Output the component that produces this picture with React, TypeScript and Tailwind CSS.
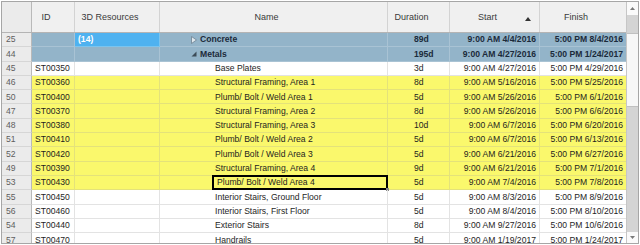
import React from "react";

type Row = {
  n: string;
  id: string;
  res?: string;
  name: string;
  level: 1 | 2;
  dur: string;
  start: string;
  finish: string;
  kind: "sum" | "yellow" | "white";
  expanded?: boolean;
  editor?: boolean;
};

const rows: Row[] = [
  { n: "25", id: "", res: "(14)", name: "Concrete", level: 1, dur: "89d", start: "9:00 AM 4/4/2016", finish: "5:00 PM 8/4/2016", kind: "sum", expanded: false },
  { n: "44", id: "", name: "Metals", level: 1, dur: "195d", start: "9:00 AM 4/27/2016", finish: "5:00 PM 1/24/2017", kind: "sum", expanded: true },
  { n: "45", id: "ST00350", name: "Base Plates", level: 2, dur: "3d", start: "9:00 AM 4/27/2016", finish: "5:00 PM 4/29/2016", kind: "white" },
  { n: "46", id: "ST00360", name: "Structural Framing, Area 1", level: 2, dur: "8d", start: "9:00 AM 5/16/2016", finish: "5:00 PM 5/25/2016", kind: "yellow" },
  { n: "50", id: "ST00400", name: "Plumb/ Bolt / Weld Area 1", level: 2, dur: "5d", start: "9:00 AM 5/26/2016", finish: "5:00 PM 6/1/2016", kind: "yellow" },
  { n: "47", id: "ST00370", name: "Structural Framing, Area 2", level: 2, dur: "8d", start: "9:00 AM 5/26/2016", finish: "5:00 PM 6/6/2016", kind: "yellow" },
  { n: "48", id: "ST00380", name: "Structural Framing, Area 3", level: 2, dur: "10d", start: "9:00 AM 6/7/2016", finish: "5:00 PM 6/20/2016", kind: "yellow" },
  { n: "51", id: "ST00410", name: "Plumb/ Bolt / Weld Area 2", level: 2, dur: "5d", start: "9:00 AM 6/7/2016", finish: "5:00 PM 6/13/2016", kind: "yellow" },
  { n: "52", id: "ST00420", name: "Plumb/ Bolt / Weld Area 3", level: 2, dur: "5d", start: "9:00 AM 6/21/2016", finish: "5:00 PM 6/27/2016", kind: "yellow" },
  { n: "49", id: "ST00390", name: "Structural Framing, Area 4", level: 2, dur: "9d", start: "9:00 AM 6/21/2016", finish: "5:00 PM 7/1/2016", kind: "yellow" },
  { n: "53", id: "ST00430", name: "Plumb/ Bolt / Weld Area 4", level: 2, dur: "5d", start: "9:00 AM 7/4/2016", finish: "5:00 PM 7/8/2016", kind: "yellow", editor: true },
  { n: "55", id: "ST00450", name: "Interior Stairs, Ground Floor", level: 2, dur: "5d", start: "9:00 AM 8/3/2016", finish: "5:00 PM 8/9/2016", kind: "white" },
  { n: "56", id: "ST00460", name: "Interior Stairs, First Floor", level: 2, dur: "5d", start: "9:00 AM 8/4/2016", finish: "5:00 PM 8/10/2016", kind: "white" },
  { n: "54", id: "ST00440", name: "Exterior Stairs", level: 2, dur: "8d", start: "9:00 AM 9/27/2016", finish: "5:00 PM 10/6/2016", kind: "white" },
  { n: "57", id: "ST00470", name: "Handrails", level: 2, dur: "5d", start: "9:00 AM 1/19/2017", finish: "5:00 PM 1/24/2017", kind: "white" },
];

function Collapsed() {
  return (
    <svg width="6" height="8" viewBox="0 0 6 8" className="shrink-0">
      <path d="M0.5 0.5 L5.5 4 L0.5 7.5 Z" fill="#dfe8ee" stroke="#6d8191" strokeWidth="0.8" />
    </svg>
  );
}

function Expanded() {
  return (
    <svg width="6" height="6" viewBox="0 0 6 6" className="shrink-0">
      <path d="M5.5 0.5 L5.5 5.5 L0.5 5.5 Z" fill="#3d4c58" />
    </svg>
  );
}

function GridRow({ r }: { r: Row }) {
  const bg =
    r.kind === "sum" ? "bg-[#93b4c9]" : r.kind === "yellow" ? "bg-[#faf86c]" : "bg-white";
  const text =
    r.kind === "sum" ? "font-bold text-[#1b2a3a]" : "text-[#1e1e1e]";
  const line =
    r.kind === "sum" ? "border-[#a9c3d4]" : r.kind === "yellow" ? "border-[#e4e27a]" : "border-[#e3e3e3]";
  const vline =
    r.kind === "sum" ? "border-[#a9c3d4]" : r.kind === "yellow" ? "border-[#e0de80]" : "border-[#dcdcdc]";
  return (
    <div className="flex h-[14.3px] shrink-0">
      <div className="w-[30px] shrink-0 flex items-center pl-[4px] bg-[#ebebeb] text-[#5e5e5e] border-r border-b border-r-[#b9b9b9] border-b-[#d6d6d6]">
        {r.n}
      </div>
      <div className={`flex flex-1 ${bg} ${text}`}>
        <div className={`w-[43px] shrink-0 flex items-center pl-[3px] border-r border-b ${vline} ${line}`}>
          {r.id}
        </div>
        <div
          className={`w-[85px] shrink-0 flex items-center pl-[3px] border-r border-b ${
            r.res ? "bg-[#4fb2f0] text-white font-bold border-[#7cc4ee]" : `${vline} ${line}`
          }`}
        >
          {r.res ?? ""}
        </div>
        <div className={`w-[228px] shrink-0 flex items-center border-r border-b ${vline} ${line} relative`}>
          {r.level === 1 ? (
            <div className="flex items-center pl-[31px] gap-[3px]">
              {r.expanded ? <Expanded /> : <Collapsed />}
              <span>{r.name}</span>
            </div>
          ) : r.editor ? (
            <div className="ml-[52px] mr-[-1px] h-[15px] mt-[-1px] flex-1 flex items-center pl-[3px] border-2 border-black relative">
              {r.name}
              <div className="absolute right-[-3px] bottom-[-3px] w-[3px] h-[3px] bg-[#888]" />
            </div>
          ) : (
            <div className="pl-[55px]">{r.name}</div>
          )}
        </div>
        <div className={`w-[62px] shrink-0 flex items-center pl-[26px] border-r border-b ${vline} ${line}`}>
          {r.dur}
        </div>
        <div className={`w-[90px] shrink-0 flex items-center justify-end pr-[3px] border-r border-b ${vline} ${line}`}>
          {r.start}
        </div>
        <div className={`w-[86px] shrink-0 flex items-center justify-end pr-[3px] border-b ${line}`}>
          {r.finish}
        </div>
      </div>
    </div>
  );
}

function HeaderCell({ w, label, arrow }: { w: string; label?: string; arrow?: boolean }) {
  return (
    <div className={`${w} shrink-0 relative flex items-center justify-center pr-[14px] border-r border-[#d3d3d3]`}>
      {label}
      {arrow && (
        <svg width="6" height="4" viewBox="0 0 6 4" className="absolute right-[8px] top-[15px]">
          <path d="M0 4 L3 0 L6 4 Z" fill="#333" />
        </svg>
      )}
    </div>
  );
}

export default function App() {
  return (
    <div className="w-[640px] h-[245px] bg-white overflow-hidden pt-[1px] pl-[1px] font-['Liberation_Sans',Arial,sans-serif] text-[8.6px] leading-none">
      <div className="w-[638px] h-[243px] border border-[#a6a6a6] flex overflow-hidden">
        <div className="w-[624px] shrink-0 flex flex-col overflow-hidden">
          <div className="flex h-[31px] shrink-0 bg-[#f0f0f0] border-b border-[#b4b4b4] text-[9px] text-[#3a3a3a]">
            <div className="w-[30px] shrink-0 border-r border-[#b9b9b9] bg-[#ebebeb]" />
            <HeaderCell w="w-[43px]" label="ID" />
            <HeaderCell w="w-[85px]" label="3D Resources" />
            <HeaderCell w="w-[228px]" label="Name" />
            <HeaderCell w="w-[62px]" label="Duration" />
            <HeaderCell w="w-[90px]" label="Start" arrow />
            <div className="w-[86px] shrink-0 flex items-center justify-center pr-[14px]">Finish</div>
          </div>
          {rows.map((r) => (
            <GridRow key={r.n} r={r} />
          ))}
        </div>
        <div className="w-[12px] shrink-0 border-l border-[#c6c6c6] flex flex-col bg-[#d4d4d4]">
          <div className="h-[13px] shrink-0 bg-[#fafafa] flex items-center justify-center">
            <svg width="5" height="3" viewBox="0 0 5 3">
              <path d="M0 3 L2.5 0 L5 3 Z" fill="#7a7a7a" />
            </svg>
          </div>
          <div className="h-[18px] shrink-0" />
          <div className="h-[74px] shrink-0 bg-[#f7f7f7] border-y border-[#c0c0c0]" />
          <div className="flex-1" />
          <div className="h-[11px] shrink-0 bg-[#fafafa] flex items-center justify-center">
            <svg width="5" height="3" viewBox="0 0 5 3">
              <path d="M0 0 L2.5 3 L5 0 Z" fill="#7a7a7a" />
            </svg>
          </div>
        </div>
      </div>
    </div>
  );
}
